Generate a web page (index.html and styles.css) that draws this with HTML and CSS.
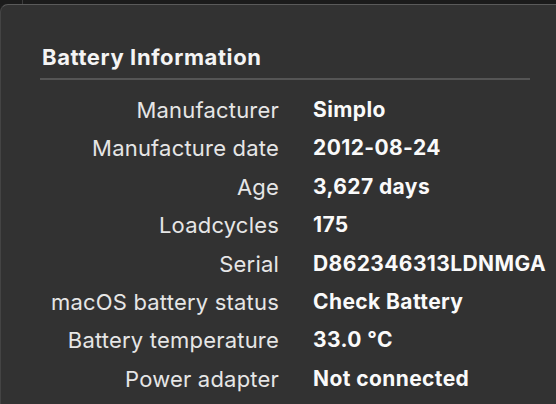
FILE: index.html
```html
<!DOCTYPE html>
<html>
<head>
<meta charset="utf-8">
<link rel="stylesheet" href="styles.css">
</head>
<body>
<div class="topbar"><div class="topbar-left"></div></div>
<div class="panel">
  <h1 class="title">Battery Information</h1>
  <div class="rule"></div>
  <dl class="info">
    <dt>Manufacturer</dt><dd>Simplo</dd>
    <dt>Manufacture date</dt><dd>2012-08-24</dd>
    <dt>Age</dt><dd>3,627 days</dd>
    <dt>Loadcycles</dt><dd>175</dd>
    <dt>Serial</dt><dd>D862346313LDNMGA</dd>
    <dt>macOS battery status</dt><dd>Check Battery</dd>
    <dt>Battery temperature</dt><dd>33.0 °C</dd>
    <dt>Power adapter</dt><dd>Not connected</dd>
  </dl>
</div>
</body>
</html>
```
FILE: styles.css
```css
html, body {
  margin: 0;
  padding: 0;
  background: #1c1c1c;
  height: 100%;
  overflow: hidden;
}
body {
  font-family: Inter, "Noto Sans", sans-serif;
  color: #e8e8e8;
}
.topbar {
  height: 4px;
  background: #1b1b1b;
}
.topbar-left {
  width: 22px;
  height: 4px;
  border-right: 1px solid #3c3c3c;
}
.panel {
  height: 400px;
  background: #323232;
  border-top: 1px solid #5a5a5a;
  border-left: 1px solid #444;
  border-top-left-radius: 8px;
  padding: 0 26px 0 41px;
  box-sizing: border-box;
}
.title {
  margin: 0;
  padding-top: 39px;
  font-size: 22px;
  line-height: 26px;
  font-weight: 700;
  color: #f4f4f4;
  letter-spacing: 0.6px;
}
.rule {
  height: 2px;
  background: #555;
  margin-top: 8px;
  margin-left: -2px;
}
.info {
  display: grid;
  grid-template-columns: 237px auto;
  column-gap: 34px;
  row-gap: 0;
  margin: 11px 0 0 0;
  font-size: 22px;
  line-height: 38.4px;
  letter-spacing: 0.2px;
}
.info dt {
  text-align: right;
  color: #e6e6e6;
}
.info dd {
  margin: 0;
  font-size: 21px;
  font-weight: 700;
  color: #fafafa;
  letter-spacing: 0.4px;
}
```
